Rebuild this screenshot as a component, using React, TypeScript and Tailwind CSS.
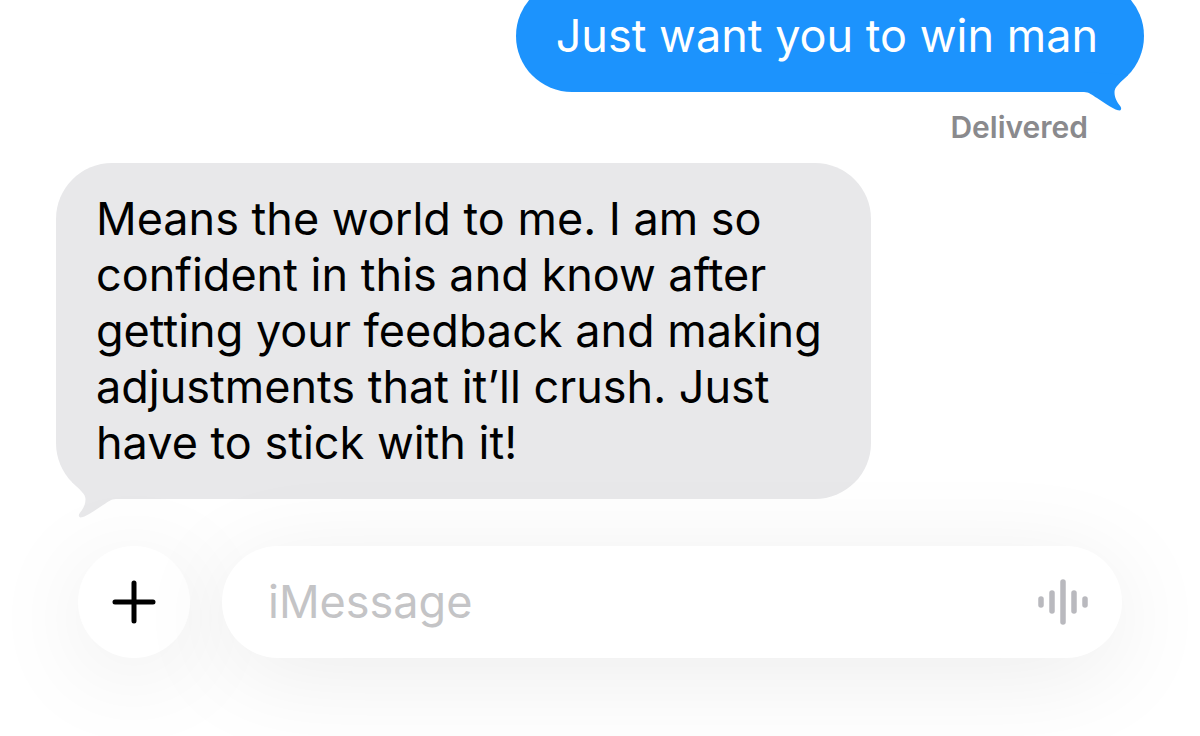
import { useState } from 'react';

type Message = {
  id: number;
  text: string;
  fromMe: boolean;
};

const MESSAGES: Message[] = [
  { id: 1, text: 'Just want you to win man', fromMe: true },
  {
    id: 2,
    text: 'Means the world to me. I am so confident in this and know after getting your feedback and making adjustments that it’ll crush. Just have to stick with it!',
    fromMe: false,
  },
];

const BARS = [
  { x: 3, half: 3 },
  { x: 14, half: 9 },
  { x: 25, half: 20 },
  { x: 36, half: 9 },
  { x: 47, half: 3 },
];

function Tail({ fromMe }: { fromMe: boolean }) {
  return (
    <svg
      viewBox="0 0 60 60"
      aria-hidden="true"
      className={`absolute -bottom-5 size-[60px] ${
        fromMe ? 'right-0 text-[#1c93fd]' : 'left-0 -scale-x-100 text-[#e8e8ea]'
      }`}
    >
      <path
        fill="currentColor"
        d="M0 20V40C5 40 8 43 13 46L22 52C27 55 31 57.500 34 58.300C37 59 38 57 36.500 54.500C33 50 30.500 46 30.500 40C30.500 35 36 31 44 23Z"
      />
    </svg>
  );
}

function Bubble({ message }: { message: Message }) {
  return (
    <div
      className={`relative max-w-[815px] rounded-[56px] py-7 text-[45px] leading-[56px] ${
        message.fromMe
          ? 'self-end bg-[#1c93fd] pr-[46px] pl-10 text-white'
          : 'self-start bg-[#e8e8ea] px-10 text-black'
      }`}
    >
      <p>{message.text}</p>
      <Tail fromMe={message.fromMe} />
    </div>
  );
}

export default function App() {
  const [draft, setDraft] = useState('');

  return (
    <main className="min-h-screen overflow-hidden bg-white font-['Inter','Liberation_Sans',sans-serif]">
      {/* the thread is scrolled, so the newest sent bubble runs off the top */}
      <section className="-mt-5 flex flex-col px-14">
        <Bubble message={MESSAGES[0]} />
        <p className="mt-[15px] mb-4 self-end pr-14 text-[30px] leading-10 font-semibold text-[#8a8a8d]">
          Delivered
        </p>
        <Bubble message={MESSAGES[1]} />
      </section>

      <form
        onSubmit={e => e.preventDefault()}
        className="relative mt-[47px] flex gap-8 px-[78px] pb-[78px]"
      >
        <button
          type="button"
          aria-label="Add attachment"
          className="flex size-28 shrink-0 items-center justify-center rounded-full bg-white text-black shadow-[0_16px_100px_rgba(0,0,0,0.08)]"
        >
          <svg viewBox="0 0 44 44" className="size-11" fill="none" stroke="currentColor" strokeWidth="5" strokeLinecap="round">
            <path d="M22 3V41M3 22H41" />
          </svg>
        </button>

        <div className="flex h-28 min-w-0 flex-1 items-center rounded-full bg-white pr-[34px] pl-[46px] shadow-[0_16px_100px_rgba(0,0,0,0.08)]">
          <input
            type="text"
            aria-label="Message"
            placeholder="iMessage"
            value={draft}
            onChange={e => setDraft(e.target.value)}
            className="min-w-0 flex-1 bg-transparent text-[45px] leading-[56px] text-black outline-none placeholder:text-[#c4c4c6]"
          />
          <button type="button" aria-label="Record audio" className="shrink-0 text-[#b9b9be]">
            <svg viewBox="0 0 50 46" className="h-[46px] w-[50px]" stroke="currentColor" strokeWidth="5.500" strokeLinecap="round">
              {BARS.map(bar => (
                <line key={bar.x} x1={bar.x} x2={bar.x} y1={23 - bar.half} y2={23 + bar.half} />
              ))}
            </svg>
          </button>
        </div>
      </form>
    </main>
  );
}
